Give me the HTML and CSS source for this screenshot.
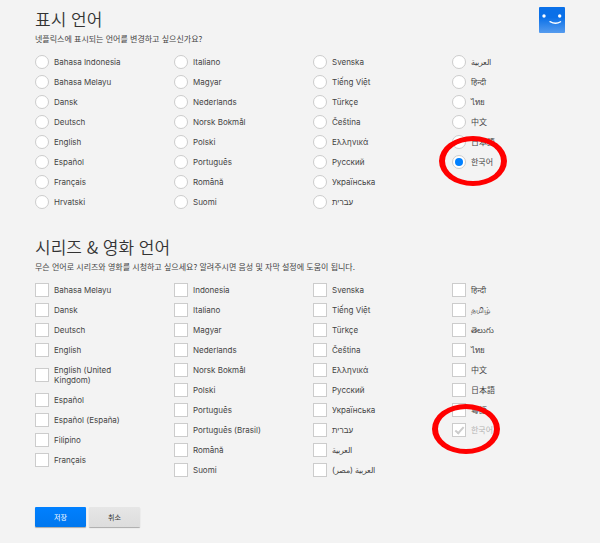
FILE: index.html
```html
<!DOCTYPE html>
<html lang="ko">
<head>
    <meta charset="UTF-8">
    <meta name="viewport" content="width=device-width, initial-scale=1.0">
    <title>언어 설정</title>
    <link rel="stylesheet" href="styles.css">
</head>
<body>

<form class="container">
    <section class="display-language">
        <div class="header">
            <h1>표시 언어</h1>
            <svg class="avatar" viewBox="0 0 26 26" role="img" aria-label="프로필">
                <defs>
                    <linearGradient id="sky" x1="0" y1="0" x2="0" y2="1">
                        <stop offset="0.4" stop-color="#0a70e8"/>
                        <stop offset="1" stop-color="#559bee"/>
                    </linearGradient>
                </defs>
                <rect width="26" height="26" rx="1" fill="url(#sky)"/>
                <circle cx="5" cy="9" r="1.7" fill="#fff"/>
                <circle cx="20.7" cy="9" r="1.7" fill="#fff"/>
                <path d="M11 14.6Q16.500 17.800 21.600 14.800" fill="none" stroke="#fff" stroke-width="1.300" stroke-linecap="round"/>
            </svg>
        </div>
        <p>넷플릭스에 표시되는 언어를 변경하고 싶으신가요?</p>
        <div class="languages">
            <div class="column">
                <label><input type="radio" name="display"><span>Bahasa Indonesia</span></label>
                <label><input type="radio" name="display"><span>Bahasa Melayu</span></label>
                <label><input type="radio" name="display"><span>Dansk</span></label>
                <label><input type="radio" name="display"><span>Deutsch</span></label>
                <label><input type="radio" name="display"><span>English</span></label>
                <label><input type="radio" name="display"><span>Español</span></label>
                <label><input type="radio" name="display"><span>Français</span></label>
                <label><input type="radio" name="display"><span>Hrvatski</span></label>
            </div>
            <div class="column">
                <label><input type="radio" name="display"><span>Italiano</span></label>
                <label><input type="radio" name="display"><span>Magyar</span></label>
                <label><input type="radio" name="display"><span>Nederlands</span></label>
                <label><input type="radio" name="display"><span>Norsk Bokmål</span></label>
                <label><input type="radio" name="display"><span>Polski</span></label>
                <label><input type="radio" name="display"><span>Português</span></label>
                <label><input type="radio" name="display"><span>Română</span></label>
                <label><input type="radio" name="display"><span>Suomi</span></label>
            </div>
            <div class="column">
                <label><input type="radio" name="display"><span>Svenska</span></label>
                <label><input type="radio" name="display"><span>Tiếng Việt</span></label>
                <label><input type="radio" name="display"><span>Türkçe</span></label>
                <label><input type="radio" name="display"><span>Čeština</span></label>
                <label><input type="radio" name="display"><span>Ελληνικά</span></label>
                <label><input type="radio" name="display"><span>Русский</span></label>
                <label><input type="radio" name="display"><span>Українська</span></label>
                <label><input type="radio" name="display"><span dir="rtl">עברית</span></label>
            </div>
            <div class="column">
                <label><input type="radio" name="display"><span dir="rtl" lang="ar">العربية</span></label>
                <label><input type="radio" name="display"><span>हिन्दी</span></label>
                <label><input type="radio" name="display"><span>ไทย</span></label>
                <label><input type="radio" name="display"><span lang="zh">中文</span></label>
                <label><input type="radio" name="display"><span lang="ja">日本語</span></label>
                <label class="marked"><input type="radio" name="display" checked><span>한국어</span></label>
            </div>
        </div>
    </section>

    <section class="show-languages">
        <h1>시리즈 &amp; 영화 언어</h1>
        <p>무슨 언어로 시리즈와 영화를 시청하고 싶으세요? 알려주시면 음성 및 자막 설정에 도움이 됩니다.</p>
        <div class="languages">
            <div class="column">
                <label><input type="checkbox"><span>Bahasa Melayu</span></label>
                <label><input type="checkbox"><span>Dansk</span></label>
                <label><input type="checkbox"><span>Deutsch</span></label>
                <label><input type="checkbox"><span>English</span></label>
                <label><input type="checkbox"><span>English (United Kingdom)</span></label>
                <label><input type="checkbox"><span>Español</span></label>
                <label><input type="checkbox"><span>Español (España)</span></label>
                <label><input type="checkbox"><span>Filipino</span></label>
                <label><input type="checkbox"><span>Français</span></label>
            </div>
            <div class="column">
                <label><input type="checkbox"><span>Indonesia</span></label>
                <label><input type="checkbox"><span>Italiano</span></label>
                <label><input type="checkbox"><span>Magyar</span></label>
                <label><input type="checkbox"><span>Nederlands</span></label>
                <label><input type="checkbox"><span>Norsk Bokmål</span></label>
                <label><input type="checkbox"><span>Polski</span></label>
                <label><input type="checkbox"><span>Português</span></label>
                <label><input type="checkbox"><span>Português (Brasil)</span></label>
                <label><input type="checkbox"><span>Română</span></label>
                <label><input type="checkbox"><span>Suomi</span></label>
            </div>
            <div class="column">
                <label><input type="checkbox"><span>Svenska</span></label>
                <label><input type="checkbox"><span>Tiếng Việt</span></label>
                <label><input type="checkbox"><span>Türkçe</span></label>
                <label><input type="checkbox"><span>Čeština</span></label>
                <label><input type="checkbox"><span>Ελληνικά</span></label>
                <label><input type="checkbox"><span>Русский</span></label>
                <label><input type="checkbox"><span>Українська</span></label>
                <label><input type="checkbox"><span dir="rtl">עברית</span></label>
                <label><input type="checkbox"><span dir="rtl" lang="ar">العربية</span></label>
                <label><input type="checkbox"><span dir="rtl" lang="ar">العربية (مصر)</span></label>
            </div>
            <div class="column">
                <label><input type="checkbox"><span>हिन्दी</span></label>
                <label><input type="checkbox"><span>தமிழ்</span></label>
                <label><input type="checkbox"><span>తెలుగు</span></label>
                <label><input type="checkbox"><span>ไทย</span></label>
                <label><input type="checkbox"><span lang="zh">中文</span></label>
                <label><input type="checkbox"><span lang="ja">日本語</span></label>
                <label><input type="checkbox"><span lang="zh">粵語</span></label>
                <label class="marked"><input type="checkbox" checked disabled><span>한국어</span></label>
            </div>
        </div>
    </section>

    <div class="button-group">
        <button type="submit" class="save">저장</button>
        <button type="button" class="cancel">취소</button>
    </div>
</form>

</body>
</html>
```
FILE: styles.css
```css
*,
*::before,
*::after {
    box-sizing: border-box;
}
body {
    margin: 0;
    background: #f3f3f3;
    color: #444;
    font-family: Inter, "Noto Sans CJK KR", "Noto Sans", sans-serif;
    font-size: 8px;
    line-height: 10px;
}
.container {
    padding: 7px 9px 16px 35px;
}
.header {
    display: flex;
    justify-content: space-between;
    align-items: flex-start;
    padding-right: 26px;
}
.avatar {
    width: 26px;
    height: 26px;
}
h1 {
    margin: 0;
    color: #333;
    font-family: "Noto Sans CJK KR", sans-serif;
    font-size: 17px;
    font-weight: 350;
    line-height: 24px;
}
p {
    margin: 0;
    font-family: "Noto Sans CJK KR", sans-serif;
    line-height: 12px;
}
.languages {
    display: grid;
    grid-template-columns: repeat(4, 1fr);
}
.display-language .languages {
    margin-top: 7px;
}
.show-languages {
    margin-top: 23px;
}
.show-languages p {
    margin-top: 2px;
}
.show-languages .languages {
    margin-top: 7px;
}
.column label {
    position: relative;
    display: flex;
    align-items: center;
    gap: 5px;
    min-height: 20px;
    padding-right: 40px;
}
.column span {
    margin: 5px 0;
}
input {
    flex: none;
    display: grid;
    place-items: center;
    width: 14px;
    height: 14px;
    margin: 0;
    border: 1px solid #ccc;
    background: #fff;
    appearance: none;
}
input[type="radio"] {
    border-radius: 50%;
}
input[type="radio"]:checked::before {
    content: "";
    width: 8px;
    height: 8px;
    border-radius: 50%;
    background: #0080ff;
}
input[type="checkbox"]:checked::before {
    content: "";
    width: 9px;
    height: 5px;
    border: solid #ccc;
    border-width: 0 0 2px 2px;
    transform: translateY(-1px) rotate(-48deg);
}
input:disabled + span {
    color: #b3b3b3;
}
/* red ring around the Korean option */
.marked::after {
    content: "";
    position: absolute;
    top: -16px;
    left: -13px;
    width: 68px;
    height: 50px;
    border: 6px solid #f00;
    border-width: 5px 6px;
    border-radius: 50%;
    pointer-events: none;
}
.show-languages .marked::after {
    left: -20px;
}
.button-group {
    display: flex;
    gap: 3px;
    margin-top: 27px;
}
.button-group button {
    min-width: 51px;
    height: 20px;
    padding: 0 8px;
    border: 0;
    border-radius: 1px;
    font-family: "Noto Sans CJK KR", sans-serif;
    font-size: 7px;
    line-height: 10px;
    cursor: pointer;
    box-shadow: 0 1px 1px rgba(0, 0, 0, 0.3);
}
.button-group .save {
    background: linear-gradient(#0080ff, #0077ee);
    color: #fff;
}
.button-group .cancel {
    background: linear-gradient(#e6e6e6, #ddd);
    color: #333;
}
```
